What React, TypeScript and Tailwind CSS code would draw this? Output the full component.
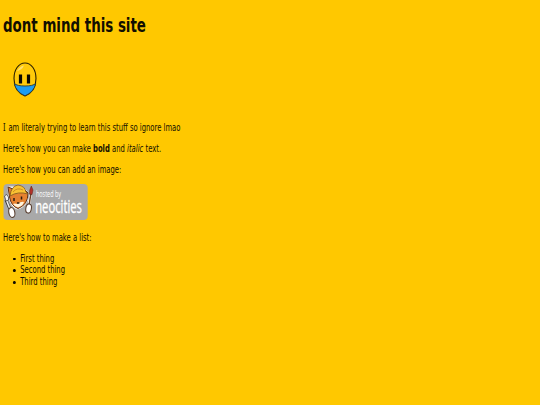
import React from 'react';

const LIST_ITEMS = ['First thing', 'Second thing', 'Third thing'];

const Mascot: React.FC = () => (
    <svg width="24" height="35" viewBox="0 0 24 35" className="block">
        <path d="M12 1 C18.5 1 23 8 23 16.5 C23 25 19 31 12 34 C5 31 1 25 1 16.5 C1 8 5.5 1 12 1Z" fill="#ffca0a" stroke="#2b2000" strokeWidth="1.1" />
        <path d="M4 9 Q7 4 11 3.5 Q9 8 4 9Z" fill="#ffdf70" />
        <path d="M1.3 21.5 Q4 24 12 24 Q20 24 22.7 21.5 Q21 30 12 33.8 Q3 30 1.3 21.5Z" fill="#1c9cf0" stroke="#2e3b32" strokeWidth="0.9" />
        <path d="M7.5 12.5v9M15.5 12.5v9" stroke="#0c0900" strokeWidth="3.2" />
    </svg>
);

const HostBadge: React.FC = () => (
    <svg width="85" height="36" viewBox="0 0 85 36" className="block">
        <rect x="0.5" width="84.2" height="36" rx="4" fill="#a9a9a9" />
        {/* cat with hard hat */}
        <path d="M6 13 L5 3 L11 3 Q17 0 21 4 L25 9 L24 17 Q21 24 14 25 Q8 23 6 13Z" fill="#fff" stroke="#fff" strokeWidth="1" />
        <path d="M6.5 13 L5 3 L10 5 L21 5 L25 9 Q25 21 15 24.5 Q8 22 6.5 13Z" fill="#e5812f" stroke="#5b3018" strokeWidth="1" />
        <path d="M7 12 Q8 2 15 1 Q22 2 23 8 L25 10 Q15 7 7 12Z" fill="#f9c233" stroke="#7b521d" strokeWidth="0.8" />
        <path d="M10 8 Q14 3 20 6" fill="none" stroke="#c4831d" strokeWidth="0.8" />
        <path d="M10 20 Q12 19 14 20 Q19 17 21 18 Q20 22 15 23.5 Q12 23 10 20Z" fill="#fff4dd" />
        <path d="M11 14v3M18.5 12.5v3M14 19h2.4" stroke="#2e1c12" strokeWidth="1.5" />
        {/* wrench and brush */}
        <path d="M3 16 L7 25" stroke="#333" strokeWidth="3" />
        <path d="M3 15 L7 25" stroke="#eee" strokeWidth="1.6" />
        <path d="M1.5 12 L3.5 10.5 L5.5 13 L5.5 16 L3 17Z" fill="#f7f7f7" stroke="#333" strokeWidth="0.7" />
        <path d="M27.5 11 L25.5 23" stroke="#fff" strokeWidth="2.6" />
        <path d="M27.8 10 L25.8 23" stroke="#6b4228" strokeWidth="1.5" />
        <path d="M28.3 2 L30 6 L29 10.5 L26.6 10 L26.8 6Z" fill="#b5322a" stroke="#5b2018" strokeWidth="0.5" />
        <ellipse cx="8.8" cy="28.5" rx="3" ry="5" fill="#fff" stroke="#5a4032" strokeWidth="1.1" transform="rotate(-12 8.8 28.5)" />
        <ellipse cx="25.6" cy="24.5" rx="2.8" ry="4.6" fill="#fff" stroke="#5a4032" strokeWidth="1.1" transform="rotate(10 25.6 24.5)" />
        <text transform="translate(33 13.2) scale(.64 1)" fontFamily="Open Sans, sans-serif" fontSize="8.5" fill="#fff">hosted by</text>
        <text transform="translate(32.2 28.5) scale(.625 1)" fontFamily="Open Sans, sans-serif" fontSize="18" fill="#fff" stroke="#fff" strokeWidth="0.3">neocities</text>
    </svg>
);

const App: React.FC = () => {
    return (
        <div className="h-screen overflow-hidden bg-[#ffc800] pl-[3.4px] pt-[14px] text-[#120e00] font-['DejaVu_Sans',sans-serif] text-[9.6px] leading-[11.6px]">
            <h1 className="w-[500px] origin-left scale-x-[.705] text-[19px] leading-[23px] font-bold">dont mind this site</h1>
            <div className="mt-[25px] ml-[9.5px]"><Mascot /></div>
            <div className="mt-[25px] w-[500px] origin-left scale-x-[.711] space-y-[9.5px]">
                <p><span className="font-['Noto_Sans',sans-serif] text-[10.5px] leading-none mr-[1px]">I</span> am literaly trying to learn this stuff so ignore lmao</p>
                <p>Here's how you can make <b>bold</b> and <i>italic</i> text.</p>
                <p>Here's how you can add an image:</p>
            </div>
            <div className="mt-[8px]"><HostBadge /></div>
            <div className="mt-[12px] w-[500px] origin-left scale-x-[.711]">
                <p>Here's how to make a list:</p>
                <ul className="mt-[9.5px] pl-[24.2px]">
                    {LIST_ITEMS.map(item => (
                        <li key={item} className="relative before:absolute before:-left-[10px] before:top-[5px] before:h-[2.5px] before:w-[3.5px] before:rounded-full before:bg-[#120e00]">{item}</li>
                    ))}
                </ul>
            </div>
        </div>
    );
};

export default App;
